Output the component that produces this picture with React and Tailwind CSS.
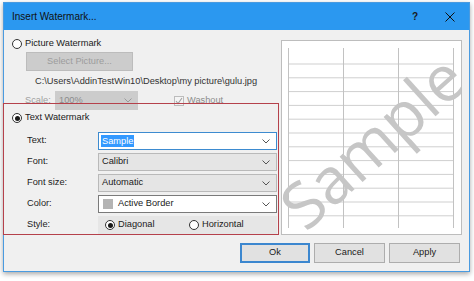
import React from "react";

const Radio = ({ checked = false }) => (
  <span className="flex h-[10px] w-[10px] shrink-0 items-center justify-center rounded-full border border-[#333333] bg-white">
    {checked && <span className="h-[5px] w-[5px] rounded-full bg-[#1a1a1a]" />}
  </span>
);

const Chevron = ({ color = "#555555" }) => (
  <svg width="8" height="5" viewBox="0 0 8 5" className="shrink-0">
    <path d="M0.5 0.5 L4 4 L7.5 0.5" fill="none" stroke={color} strokeWidth="1" />
  </svg>
);

const Combo = ({ children, variant = "gray" }) => {
  const styles = {
    gray: "bg-[#e5e5e5] border-[#b9b9b9]",
    white: "bg-white border-[#7a7a7a]",
    focus: "bg-white border-[#3d8bd0]",
  };
  return (
    <div className={`flex h-full flex-1 items-center justify-between border pl-[2px] pr-[6px] ${styles[variant]}`}>
      <div className="flex items-center">{children}</div>
      <Chevron />
    </div>
  );
};

const Row = ({ label, children }) => (
  <div className="flex h-[18px] items-center">
    <span className="w-[71px] shrink-0 text-[#222222]">{label}</span>
    {children}
  </div>
);

const SheetGrid = () => {
  const hLines = [];
  for (let i = 0; i < 12; i++) hLines.push(23 + i * 13.8);
  return (
    <svg width="179" height="193" viewBox="0 0 179 193" className="block">
      {hLines.map((y) => (
        <line key={y} x1="6" x2="171" y1={y} y2={y} stroke="#cfcfcf" strokeWidth="1" />
      ))}
      {[6.5, 61.5, 116.5, 171.5].map((x) => (
        <line key={x} x1={x} x2={x} y1="7" y2="187" stroke="#c2c2c2" strokeWidth="1" />
      ))}
    </svg>
  );
};

export default function App() {
  return (
    <div className="h-[281px] w-[474px] overflow-hidden bg-white pl-[3px] pt-[2px] font-['Liberation_Sans',Arial,sans-serif] text-[9.25px] text-[#1a1a1a]">
      <div className="flex h-[270px] w-[467px] flex-col border border-[#4a9be0] shadow-[0_2px_5px_rgba(0,0,0,0.35)]">
        {/* title bar */}
        <div className="flex h-[27px] shrink-0 items-center justify-between bg-[#2b98f0] pl-[8px] pr-[14px]">
          <span className="text-[10px] text-[#111111]">Insert Watermark...</span>
          <div className="flex items-center gap-[27px]">
            <span className="text-[10px] font-bold text-[#1a1a1a]">?</span>
            <svg width="10" height="10" viewBox="0 0 10 10">
              <path d="M0.5 0.5 L9.5 9.5 M9.5 0.5 L0.5 9.5" stroke="#111111" strokeWidth="1" />
            </svg>
          </div>
        </div>

        {/* body */}
        <div className="flex flex-1 flex-col bg-[#f0f0f0]">
          <div className="flex">
            {/* left column */}
            <div className="flex w-[275px] shrink-0 flex-col">
              <div className="mt-[7px] flex h-[13px] items-center gap-[3px] pl-[8px]">
                <Radio />
                <span>Picture Watermark</span>
              </div>
              <div className="ml-[22px] mt-[2px] flex h-[19px] w-[107px] items-center justify-center border border-[#bcbcbc] bg-[#cccccc] text-[#9c9c9c]">
                Select Picture...
              </div>
              <div className="ml-[31px] mt-[5px] flex h-[12px] items-center text-[#333333]">
                C:\Users\AddinTestWin10\Desktop\my picture\gulu.jpg
              </div>
              <div className="mt-[3px] flex h-[19px] items-center">
                <span className="ml-[21px] w-[30px] text-[#a0a0a0]">Scale:</span>
                <div className="flex h-full w-[83px] items-center justify-between bg-[#cccccc] pl-[4px] pr-[6px] text-[#8c8c8c]">
                  <span>100%</span>
                  <Chevron color="#9a9a9a" />
                </div>
                <div className="ml-[36px] flex items-center gap-[3px]">
                  <span className="flex h-[10px] w-[10px] items-center justify-center border border-[#bcbcbc] bg-[#f4f4f4]">
                    <svg width="8" height="8" viewBox="0 0 8 8">
                      <path d="M1 4 L3 6.5 L7 1" fill="none" stroke="#a0a0a0" strokeWidth="1.1" />
                    </svg>
                  </span>
                  <span className="text-[#8c8c8c]">Washout</span>
                </div>
              </div>

              {/* text watermark group */}
              <div className="relative -ml-[1px] -mt-[7px] flex h-[132px] flex-col border border-[#b5414b] pr-[1px]">
                <div className="mt-[8px] flex h-[12px] items-center gap-[3px] pl-[8px]">
                  <Radio checked />
                  <span>Text Watermark</span>
                </div>
                <div className="mt-[8px] flex flex-col gap-[3px] pl-[23px]">
                  <Row label="Text:">
                    <Combo variant="focus">
                      <span className="bg-[#3399ff] px-[1px] leading-[12px] text-white">Sample</span>
                    </Combo>
                  </Row>
                  <Row label="Font:">
                    <Combo>
                      <span className="pl-[1px]">Calibri</span>
                    </Combo>
                  </Row>
                  <Row label="Font size:">
                    <Combo>
                      <span className="pl-[1px]">Automatic</span>
                    </Combo>
                  </Row>
                  <Row label="Color:">
                    <Combo variant="white">
                      <span className="ml-[2px] h-[10px] w-[10px] bg-[#b4b4b4]" />
                      <span className="ml-[5px]">Active Border</span>
                    </Combo>
                  </Row>
                  <Row label="Style:">
                    <div className="flex h-full flex-1 items-center bg-[#e6e6e6] pl-[7px]">
                      <div className="flex w-[84px] items-center gap-[3px]">
                        <Radio checked />
                        <span>Diagonal</span>
                      </div>
                      <div className="flex items-center gap-[3px]">
                        <Radio />
                        <span>Horizontal</span>
                      </div>
                    </div>
                  </Row>
                </div>
              </div>
            </div>

            {/* preview */}
            <div className="relative ml-[2px] mt-[10px] h-[195px] w-[181px] overflow-hidden border border-[#bdbdbd] bg-white">
              <SheetGrid />
              <span className="absolute left-1/2 top-1/2 -translate-x-1/2 -translate-y-[45%] -rotate-[42deg] whitespace-nowrap font-['Open_Sans',sans-serif] text-[64px] leading-none text-[#c6c6c6]">
                Sample
              </span>
            </div>
          </div>

          {/* buttons */}
          <div className="mt-[8px] flex h-[20px] justify-end gap-[4px] pr-[9px]">
            <div className="flex w-[70px] items-center justify-center border-2 border-[#3c87cf] bg-[#e1e1e1]">Ok</div>
            <div className="flex w-[71px] items-center justify-center border border-[#adadad] bg-[#e1e1e1]">Cancel</div>
            <div className="flex w-[71px] items-center justify-center border border-[#adadad] bg-[#e1e1e1]">Apply</div>
          </div>
        </div>
      </div>
    </div>
  );
}
